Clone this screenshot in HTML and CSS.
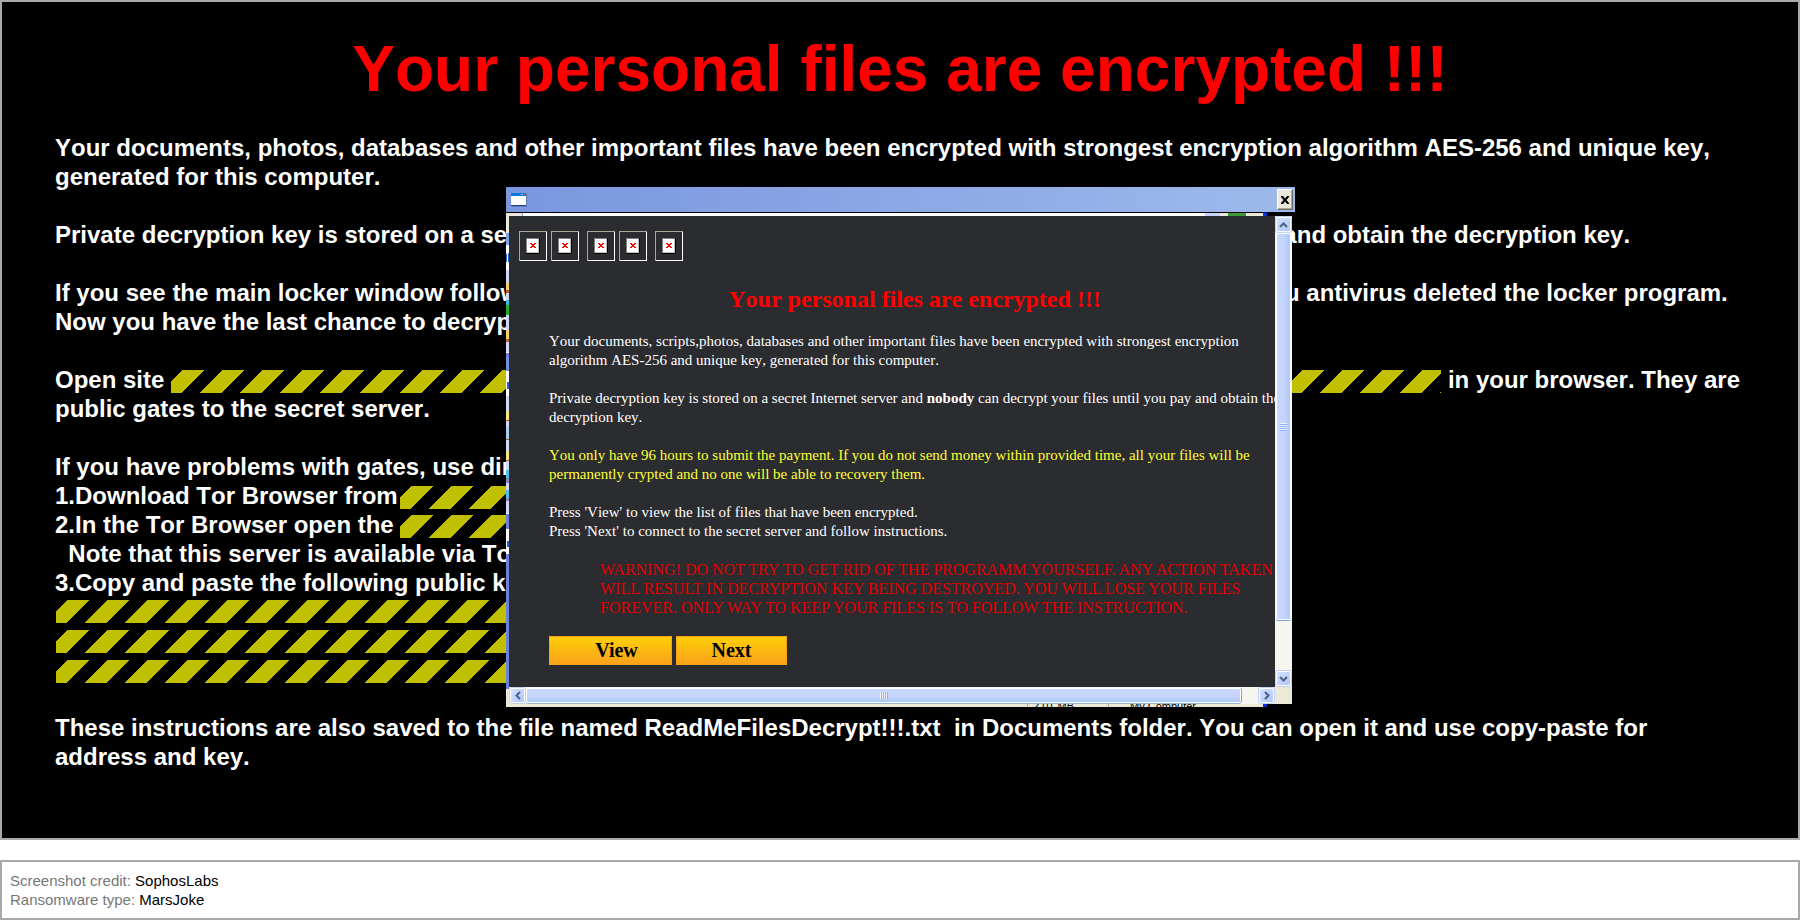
FILE: index.html
```html
<!DOCTYPE html>
<html lang="en">
<head>
  <meta charset="UTF-8">
  <meta name="viewport" content="width=device-width, initial-scale=1.0">
  <title>MarsJoke ransomware</title>
  <link rel="stylesheet" href="styles.css">
</head>
<body>
  <main class="desktop">
    <h1>Your personal files are encrypted !!!</h1>

    <div class="note">
      <p>Your documents, photos, databases and other important files have been encrypted with strongest encryption algorithm AES-256 and unique key,<br>generated for this computer.</p>
      <p>Private decryption key is stored on a secret Internet server and nobody can decrypt your files until you pay and obtain the decryption key.</p>
      <p>If you see the main locker window follow the instructions on the locker. Otherwise, it's seems that you or you antivirus deleted the locker program.<br>Now you have the last chance to decrypt your files.</p>
      <div class="para">
        <div class="line">Open site <span class="tape grow"></span> in your browser. They are</div>
        <div class="line">public gates to the secret server.</div>
      </div>
      <div class="para steps">
        <div class="line">If you have problems with gates, use direct connection:</div>
        <div class="line step"><span>1.Download Tor Browser from</span><span class="tape"></span></div>
        <div class="line step"><span>2.In the Tor Browser open the</span><span class="tape"></span></div>
        <div class="line">&nbsp; Note that this server is available via Tor Browser only.</div>
        <div class="line">3.Copy and paste the following public key in the input form.</div>
        <div class="keys">
          <span class="tape"></span>
          <span class="tape"></span>
          <span class="tape"></span>
        </div>
      </div>
      <p>These instructions are also saved to the file named ReadMeFilesDecrypt!!!.txt&nbsp; in Documents folder. You can open it and use copy-paste for<br>address and key.</p>
    </div>

    <div class="window">
      <div class="titlebar">
        <svg class="app-icon" width="16" height="14" viewBox="0 0 16 14">
          <rect x="1" y="1" width="15" height="13" fill="#5f7dbd"/>
          <rect width="15" height="12" fill="#fff"/>
          <rect width="15" height="3" fill="#0a78d8"/>
          <rect x="13" y="1" width="1" height="1" fill="#f0704a"/>
          <rect x="10" y="1" width="2" height="1" fill="#8cc6f5"/>
          <rect y="12" width="15" height="1" fill="#1c3f86"/>
        </svg>
        <button class="close" aria-label="Close">
          <svg width="10" height="8" viewBox="0 0 10 8"><path d="M1 0h2l2 2.500L7 0h2v1L6.500 4 9 7v1H7L5 5.500 3 8H1V7l2.500-3L1 1z" fill="#000"/></svg>
        </button>
      </div>
      <div class="top-edge"></div>
      <div class="frame">
        <svg class="left-edge" width="3" height="488" viewBox="0 0 3 488">
          <rect width="3" height="488" fill="#6b82dc"/>
          <rect width="3" height="17" fill="#ece9d8"/>
          <rect y="17" width="3" height="12" fill="#7ba0e8"/>
          <rect y="29" width="3" height="25" fill="#fff"/>
          <rect y="38" width="1" height="8" fill="#2a62c8"/>
          <rect x="2" y="37" width="1" height="9" fill="#2a62c8"/>
          <rect y="54" width="3" height="82" fill="#cfd9f6"/>
          <rect y="67" width="3" height="10" fill="#f4cf69"/>
          <rect y="74" width="3" height="3" fill="#b9632c"/>
          <rect y="84" width="3" height="6" fill="#3fb6e8"/>
          <rect y="89" width="3" height="10" fill="#1fae25"/>
          <rect y="114" width="3" height="11" fill="#f4cf69"/>
          <rect y="123" width="3" height="3" fill="#b9632c"/>
          <rect y="136" width="3" height="1" fill="#fff"/>
          <rect y="141" width="3" height="14" fill="#6f8fdf"/>
          <rect y="155" width="3" height="25" fill="#fff"/>
          <rect x="1" y="166" width="2" height="7" fill="#2a62c8"/>
          <rect y="180" width="3" height="117" fill="#cfd9f6"/>
          <rect y="195" width="3" height="9" fill="#ffe08a"/>
          <rect y="204" width="3" height="1" fill="#96620f"/>
          <rect y="211" width="3" height="12" fill="#a9cdf5"/>
          <rect y="223" width="3" height="1" fill="#96620f"/>
          <rect y="235" width="3" height="9" fill="#ffe08a"/>
          <rect y="244" width="3" height="1" fill="#96620f"/>
          <rect y="254" width="3" height="8" fill="#4dc0f2"/>
          <rect y="262" width="3" height="5" fill="#8d89b8"/>
          <rect y="274" width="3" height="8" fill="#4dc0f2"/>
          <rect y="282" width="3" height="3" fill="#8d89b8"/>
          <rect y="297" width="3" height="1" fill="#fff"/>
          <rect y="313" width="3" height="25" fill="#fff"/>
          <rect x="1" y="325" width="2" height="6" fill="#2a62c8"/>
          <rect y="473" width="3" height="15" fill="#ece9d8"/>
        </svg>

        <div class="panel">
          <div class="toolbar">
            <svg class="missing" viewBox="0 0 28 30"><use href="#missing"/></svg>
            <svg class="missing" viewBox="0 0 28 30"><use href="#missing"/></svg>
            <svg class="missing group" viewBox="0 0 28 30"><use href="#missing"/></svg>
            <svg class="missing" viewBox="0 0 28 30"><use href="#missing"/></svg>
            <svg class="missing group" viewBox="0 0 28 30"><use href="#missing"/></svg>
          </div>
          <div class="message">
            <h2>Your personal files are encrypted !!!</h2>
            <p>Your documents, scripts,photos, databases and other important files have been encrypted with strongest encryption<br>algorithm AES-256 and unique key, generated for this computer.</p>
            <p>Private decryption key is stored on a secret Internet server and <b>nobody</b> can decrypt your files until you pay and obtain the<br>decryption key.</p>
            <p class="deadline">You only have 96 hours to submit the payment. If you do not send money within provided time, all your files will be<br>permanently crypted and no one will be able to recovery them.</p>
            <p>Press 'View' to view the list of files that have been encrypted.<br>Press 'Next' to connect to the secret server and follow instructions.</p>
            <p class="warning">WARNING! DO NOT TRY TO GET RID OF THE PROGRAMM YOURSELF. ANY ACTION TAKEN<br>WILL RESULT IN DECRYPTION KEY BEING DESTROYED. YOU WILL LOSE YOUR FILES<br>FOREVER. ONLY WAY TO KEEP YOUR FILES IS TO FOLLOW THE INSTRUCTION.</p>
            <div class="actions">
              <button class="action view">View</button>
              <button class="action next">Next</button>
            </div>
          </div>
        </div>

        <div class="scroll vertical">
          <button class="arrow" aria-label="Scroll up"><svg width="9" height="6" viewBox="0 0 9 6"><path d="M1 5l3.500-3.500L8 5" class="chevron"/></svg></button>
          <div class="thumb"><span class="grip"></span></div>
          <button class="arrow" aria-label="Scroll down"><svg width="9" height="6" viewBox="0 0 9 6"><path d="M1 1l3.500 3.500L8 1" class="chevron"/></svg></button>
        </div>

        <div class="scroll horizontal">
          <button class="arrow" aria-label="Scroll left"><svg width="6" height="9" viewBox="0 0 6 9"><path d="M5 1L1.500 4.500 5 8" class="chevron"/></svg></button>
          <div class="thumb"><span class="grip"></span></div>
          <button class="arrow" aria-label="Scroll right"><svg width="6" height="9" viewBox="0 0 6 9"><path d="M1 1l3.500 3.500L1 8" class="chevron"/></svg></button>
        </div>
        <div class="corner"></div>
      </div>
      <div class="status">
        <span class="size">2,01 MB</span>
        <span class="place">My Computer</span>
      </div>
    </div>
  </main>

  <footer>
    <div><span>Screenshot credit:</span> SophosLabs</div>
    <div><span>Ransomware type:</span> MarsJoke</div>
  </footer>

  <!-- broken picture placeholder -->
  <svg class="defs" width="0" height="0">
    <symbol id="missing" viewBox="0 0 28 30">
      <path d="M0 0h28v1H1v29H0z" fill="#aca899"/>
      <path d="M27 1h1v29H1v-1h26z" fill="#fff"/>
      <rect x="7" y="7" width="14" height="16" fill="#000"/>
      <rect x="7" y="7" width="13" height="15" fill="#808080"/>
      <rect x="8" y="8" width="12" height="14" fill="#c0c0c0"/>
      <rect x="8" y="8" width="11" height="13" fill="#fff"/>
      <path d="M11 12h2v1h2v-1h2v1h-1v1h-1v1h1v1h1v1h-2v-1h-2v1h-2v-1h1v-1h1v-1h-1v-1h-1z" fill="#f00"/>
    </symbol>
  </svg>
</body>
</html>
```

FILE: styles.css
```css
* {
  box-sizing: border-box;
}
body {
  margin: 0;
  background: #fff;
  font-family: "Liberation Sans", Arial, sans-serif;
}
.desktop {
  position: relative;
  min-height: 840px;
  padding: 30px 52px;
  border: 2px solid #a9a9a9;
  background: #000;
  color: #fff;
  overflow: hidden;
  font-kerning: none;
}
h1 {
  margin: 0 0 27px;
  font-size: 64px;
  line-height: 74px;
  text-align: center;
  color: #f00;
}
.note {
  font-size: 24px;
  line-height: 29px;
  font-weight: bold;
  white-space: nowrap;
  padding: 0 6px 0 1px;
}
.note p,
.para {
  margin: 0 0 29px;
}
.line {
  display: flex;
  align-items: flex-end;
  white-space: pre;
}

/* hazard tape over the addresses and keys */
.tape {
  position: relative;
  display: block;
  height: 23px;
  overflow: hidden;
}
.tape::before {
  content: "";
  position: absolute;
  inset: 0 -40px;
  background: repeating-linear-gradient(90deg, #c0c000 0 22px, #000 22px 40px);
  transform: skewX(-45deg);
}
.line .tape {
  flex: 1;
  margin-bottom: 1px;
}
.step {
  width: 70%;
}
.step span:first-child {
  width: 345px;
}
.keys {
  display: flex;
  flex-direction: column;
  gap: 7px;
  width: 60%;
  padding: 3px 0 24px 1px;
}
.steps {
  margin-bottom: 6px;
}

.window {
  position: absolute;
  top: 185px;
  left: 504px;
  width: 789px;
  font-family: "Liberation Serif", "Times New Roman", serif;
}
.titlebar {
  display: flex;
  justify-content: space-between;
  align-items: center;
  height: 25px;
  padding: 0 2px 0 5px;
  background: linear-gradient(to right, #7a96df, #9db9eb);
}
.close {
  display: flex;
  align-items: center;
  justify-content: center;
  width: 16px;
  height: 21px;
  padding: 0;
  border: 1px solid;
  border-color: #fff #716f64 #716f64 #fff;
  box-shadow: inset -1px -1px #aca899;
  background: #ece9d8;
}
.top-edge {
  width: 761px;
  height: 4px;
  border-top: 1px solid #000;
  border-right: 4px solid #0831d9;
  background: linear-gradient(to right, #ece9d8 16px, #7b9bd0 16px 17px, #fff 17px 699px, #c3d3fd 699px 714px, #ece9d8 714px 722px, #3c9a3c 722px 740px, #ece9d8 740px);
}
.frame {
  display: grid;
  grid-template-columns: 3px 1fr 17px;
  grid-template-rows: auto 17px;
  width: 786px;
}
.left-edge {
  grid-row: 1 / 3;
}
.panel {
  min-width: 0;
  overflow: hidden;
  padding: 15px 0 22px 10px;
  background: #2b2c30;
}
.toolbar {
  display: flex;
  gap: 4px;
}
.missing {
  width: 28px;
  height: 30px;
}
.group {
  margin-left: 4px;
}
.message {
  margin: 25px -5px 0 30px;
  font-size: 15px;
  line-height: 19px;
  white-space: nowrap;
}
h2 {
  margin: 0 0 19px;
  font-size: 24px;
  line-height: 27px;
  text-align: center;
  color: #f00;
}
.message p {
  margin: 0 0 19px;
}
.message .deadline {
  color: #ff3;
}
.message .warning {
  margin-left: 51px;
  font-size: 16px;
  font-kerning: normal;
  color: #e00000;
}
.actions {
  display: flex;
  gap: 4px;
}
.action {
  height: 29px;
  padding: 0;
  border: 1px solid #f9a11b;
  background: linear-gradient(#ffcf08, #f9a11b);
  font: bold 20px "Liberation Serif", "Times New Roman", serif;
  color: #000;
}
.view {
  width: 123px;
  padding-left: 12px;
}
.next {
  width: 111px;
}

.scroll {
  display: flex;
  gap: 1px;
  padding: 1px;
  background: #f6f5f0;
}
.vertical {
  flex-direction: column;
  justify-content: space-between;
}
.horizontal {
  justify-content: space-between;
}
.arrow {
  display: flex;
  align-items: center;
  justify-content: center;
  width: 15px;
  height: 15px;
  padding: 0;
  border: 1px solid #fff;
  border-radius: 2px;
  box-shadow: 0 0 0 1px #c0d0f0;
  background: linear-gradient(135deg, #d3e0ff, #b0c8fa);
}
.chevron {
  fill: none;
  stroke: #4d6185;
  stroke-width: 2;
}
.thumb {
  display: flex;
  align-items: center;
  justify-content: center;
  border: 1px solid #fff;
  border-radius: 2px;
}
.vertical .thumb {
  height: 387px;
  margin-bottom: auto;
  box-shadow: 0 1px #7ea2dc;
  background: linear-gradient(to right, #c9d8fc, #c3d3fd 60%, #aec8f7);
}
.horizontal .thumb {
  width: 715px;
  margin-right: auto;
  box-shadow: 1px 0 #7ea2dc, 0 1px #98b1e4;
  background: linear-gradient(#c9d8fc, #c3d3fd 60%, #aec8f7);
}
.grip {
  width: 7px;
  height: 8px;
  background: repeating-linear-gradient(#eef4fe 0 1px, #8cb0f8 1px 2px);
}
.horizontal .grip {
  width: 8px;
  height: 7px;
  background: repeating-linear-gradient(90deg, #eef4fe 0 1px, #8cb0f8 1px 2px);
}
.corner {
  background: #ece9d8;
}

/* sliver of the explorer window under the dialog */
.status {
  display: flex;
  align-items: center;
  width: 761px;
  height: 3px;
  overflow: hidden;
  border-right: 4px solid #0831d9;
  background: #ece9d8;
  font: 11px "Liberation Sans", Arial, sans-serif;
  color: #000;
}
.size {
  margin-left: 521px;
  padding-left: 5px;
  border-left: 1px solid #aca899;
}
.place {
  margin-left: 34px;
  padding-left: 21px;
  border-left: 1px solid #aca899;
}

footer {
  margin-top: 20px;
  padding: 9px 8px;
  border: 2px solid #a9a9a9;
  font-size: 15px;
  line-height: 19px;
  color: #000;
}
footer span {
  color: #777;
}
.defs {
  position: absolute;
}
```
